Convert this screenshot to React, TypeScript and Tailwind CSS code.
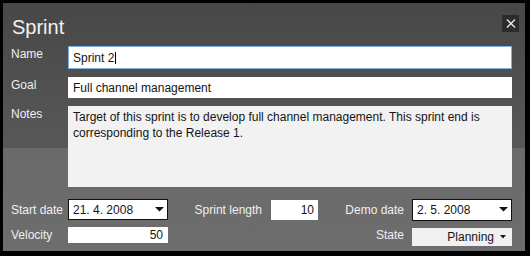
import React from "react";

function Arrow({ small }: { small?: boolean }) {
  return small ? (
    <svg width="6" height="4" viewBox="0 0 6 4" className="shrink-0">
      <polygon points="0,0 6,0 3,3.5" fill="#1a1a1a" />
    </svg>
  ) : (
    <svg width="9" height="5" viewBox="0 0 9 5" className="shrink-0">
      <polygon points="0,0 9,0 4.5,4.5" fill="#111" />
    </svg>
  );
}

export default function App() {
  return (
    <div className="w-[530px] h-[256px] bg-black pt-[3px] pl-[3px] font-['Liberation_Sans',Arial,sans-serif] text-[12px] leading-[16px]">
      <div className="w-[522px] h-[248px] bg-[linear-gradient(180deg,#474747_0px,#585858_145px,#6a6a6a_145px,#6d6d6d_100%)] flex flex-col">
        {/* header */}
        <div className="h-[43px] flex justify-between items-start pl-[9px] pr-[6px] pt-[12px]">
          <div className="text-[20px] leading-[24px] text-[#f2f2f2]">Sprint</div>
          <div className="w-[17px] h-[17px] bg-[#2c2c2c] flex items-center justify-center">
            <svg width="10" height="9" viewBox="0 0 10 9">
              <path d="M1 0.5 L9 8.5 M9 0.5 L1 8.5" stroke="#e6e6e6" strokeWidth="1.4" />
            </svg>
          </div>
        </div>

        {/* Name */}
        <div className="flex items-start pl-[8px]">
          <div className="w-[57px] text-[#efefef]">Name</div>
          <div className="w-[444px] h-[23px] bg-white border border-[#7fb0e0] flex items-center pl-[4px] text-[#151515]">
            <span>Sprint 2</span>
            <span className="inline-block w-px h-[12px] bg-black ml-[1px]" />
          </div>
        </div>

        {/* Goal */}
        <div className="flex items-start pl-[8px] mt-[8px]">
          <div className="w-[57px] text-[#efefef]">Goal</div>
          <div className="w-[444px] h-[21px] bg-white flex items-center pl-[5px] text-[#151515]">
            Full channel management
          </div>
        </div>

        {/* Notes */}
        <div className="flex items-start pl-[8px] mt-[8px]">
          <div className="w-[57px] text-[#efefef]">Notes</div>
          <div className="w-[444px] h-[81px] bg-[#f2f2f2] pl-[5px] pt-[3px] text-[#151515]">
            <div className="whitespace-nowrap">
              Target of this sprint is to develop full channel management. This sprint end is
            </div>
            <div className="whitespace-nowrap">corresponding to the Release 1.</div>
          </div>
        </div>

        {/* Row 1 */}
        <div className="flex items-center pl-[8px] mt-[12px] h-[21px]">
          <div className="w-[57px] text-[#efefef] whitespace-nowrap">Start date</div>
          <div className="w-[100px] h-[21px] bg-white border border-[#101010] flex items-center justify-between pl-[4px] pr-[3px] text-[#151515]">
            <span>21. 4. 2008</span>
            <Arrow />
          </div>
          <div className="w-[103px] text-right pr-[9px] text-[#efefef] whitespace-nowrap">Sprint length</div>
          <div className="w-[47px] h-[20px] bg-white flex items-center justify-end pr-[4px] text-[#151515]">10</div>
          <div className="w-[94px] text-right pr-[8px] text-[#efefef] whitespace-nowrap">Demo date</div>
          <div className="w-[100px] h-[22px] bg-white border border-[#101010] flex items-center justify-between pl-[4px] pr-[3px] text-[#151515]">
            <span>2. 5. 2008</span>
            <Arrow />
          </div>
        </div>

        {/* Row 2 */}
        <div className="flex items-start pl-[8px] mt-[7px]">
          <div className="w-[57px] text-[#efefef] pt-[0px]">Velocity</div>
          <div className="w-[100px] h-[16px] bg-white flex items-center justify-end pr-[5px] text-[#151515]">50</div>
          <div className="w-[244px] text-right pr-[8px] text-[#efefef]">State</div>
          <div className="w-[100px] h-[18px] mt-[1px] bg-[#f0f0f0] flex items-center justify-end pr-[6px] gap-[6px] text-[#151515]">
            <span>Planning</span>
            <Arrow small />
          </div>
        </div>
      </div>
    </div>
  );
}
